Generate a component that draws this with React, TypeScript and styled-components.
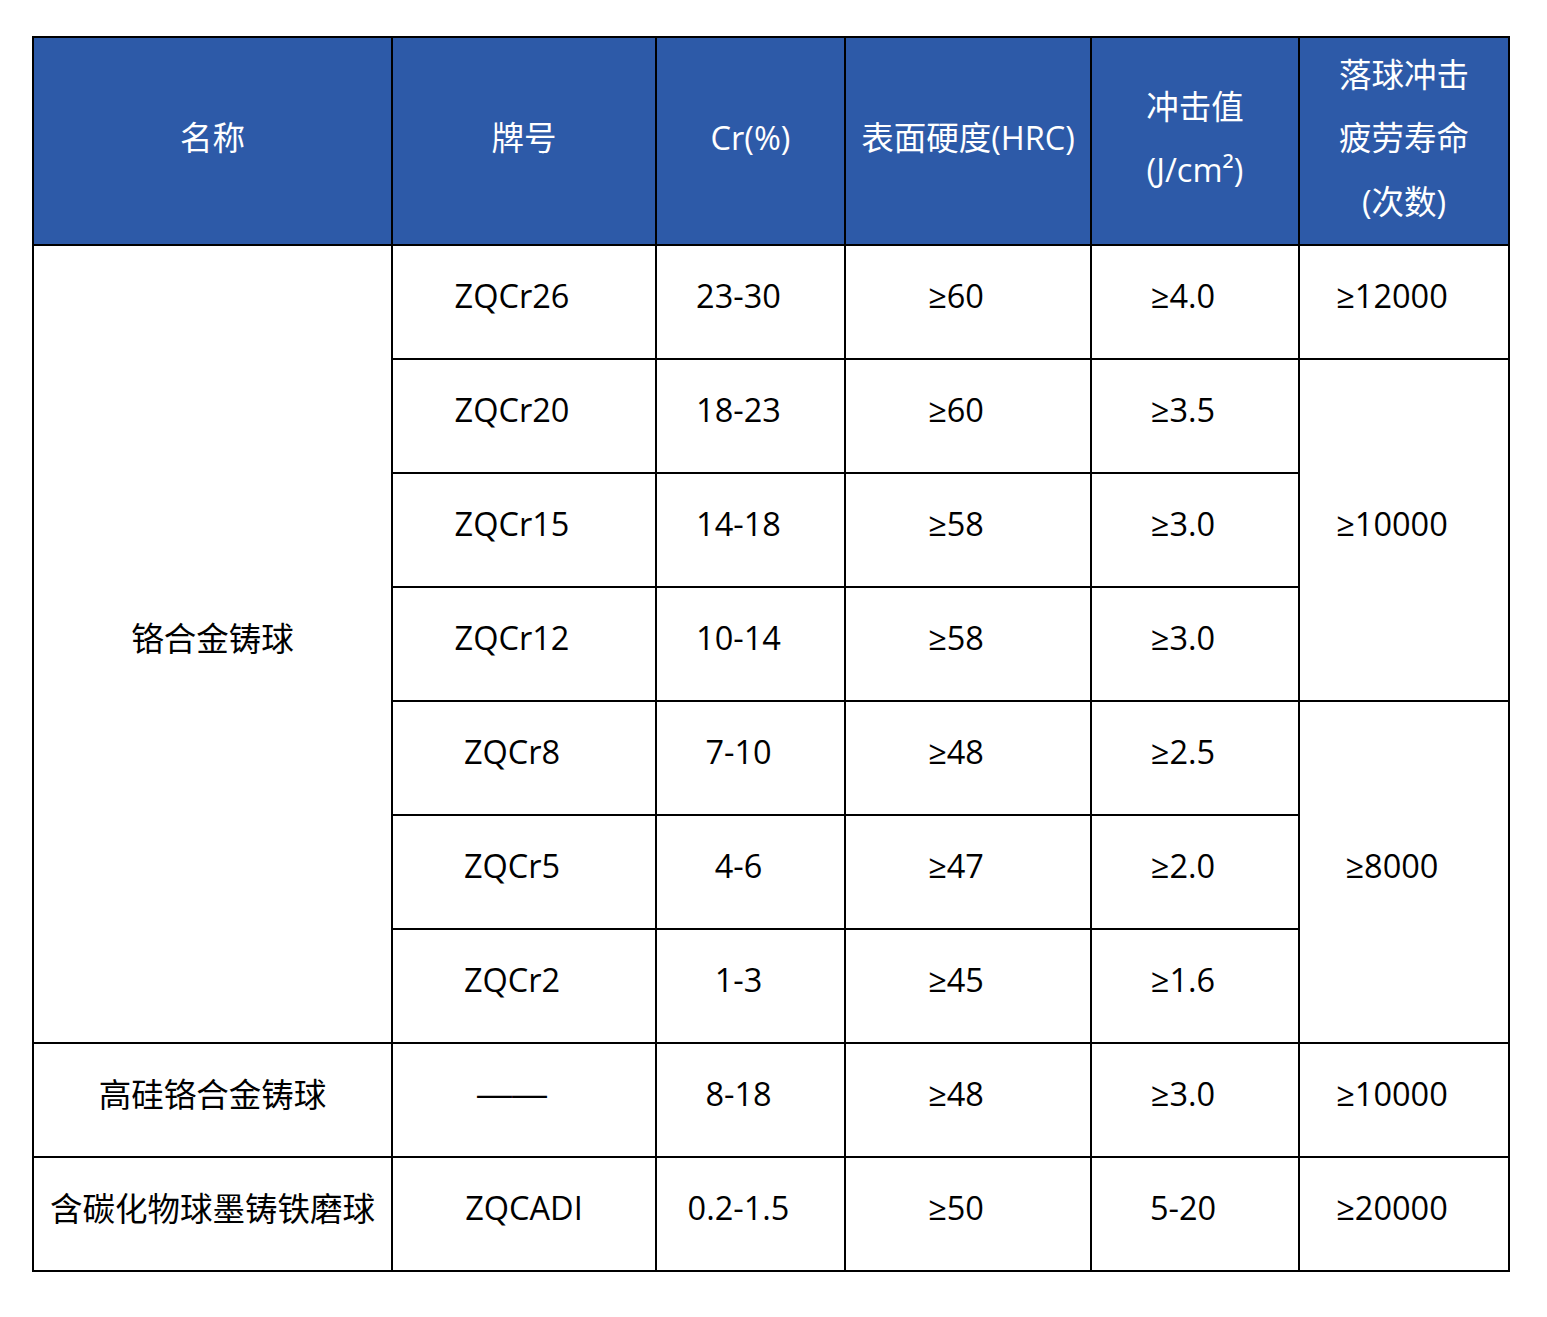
import React from "react";
import styled, { createGlobalStyle } from "styled-components";

const GlobalStyle = createGlobalStyle`
  body {
    margin: 0;
    background: #ffffff;
    font-family: "Open Sans", "Noto Sans CJK SC", sans-serif;
  }
`;

type Row = {
  name?: { text: string; span: number };
  grade: string;
  cr: string;
  hrc: string;
  impact: string;
  life?: { text: string; span: number };
  centerGrade?: boolean;
};

const rows: Row[] = [
  {
    name: { text: "铬合金铸球", span: 7 },
    grade: "ZQCr26",
    cr: "23-30",
    hrc: "≥60",
    impact: "≥4.0",
    life: { text: "≥12000", span: 1 },
  },
  {
    grade: "ZQCr20",
    cr: "18-23",
    hrc: "≥60",
    impact: "≥3.5",
    life: { text: "≥10000", span: 3 },
  },
  { grade: "ZQCr15", cr: "14-18", hrc: "≥58", impact: "≥3.0" },
  { grade: "ZQCr12", cr: "10-14", hrc: "≥58", impact: "≥3.0" },
  {
    grade: "ZQCr8",
    cr: "7-10",
    hrc: "≥48",
    impact: "≥2.5",
    life: { text: "≥8000", span: 3 },
  },
  { grade: "ZQCr5", cr: "4-6", hrc: "≥47", impact: "≥2.0" },
  { grade: "ZQCr2", cr: "1-3", hrc: "≥45", impact: "≥1.6" },
  {
    name: { text: "高硅铬合金铸球", span: 1 },
    grade: "——",
    cr: "8-18",
    hrc: "≥48",
    impact: "≥3.0",
    life: { text: "≥10000", span: 1 },
  },
  {
    name: { text: "含碳化物球墨铸铁磨球", span: 1 },
    grade: "ZQCADI",
    cr: "0.2-1.5",
    hrc: "≥50",
    impact: "5-20",
    life: { text: "≥20000", span: 1 },
    centerGrade: true,
  },
];

function App() {
  return (
    <Page>
      <GlobalStyle />
      <Table>
        <colgroup>
          <col style={{ width: 359 }} />
          <col style={{ width: 264 }} />
          <col style={{ width: 189 }} />
          <col style={{ width: 246 }} />
          <col style={{ width: 208 }} />
          <col style={{ width: 210 }} />
        </colgroup>
        <thead>
          <HeadRow>
            <Th>名称</Th>
            <Th>牌号</Th>
            <Th>Cr(%)</Th>
            <Th>表面硬度(HRC)</Th>
            <Th>
              冲击值
              <br />
              (J/cm²)
            </Th>
            <Th>
              落球冲击
              <br />
              疲劳寿命
              <br />
              (次数)
            </Th>
          </HeadRow>
        </thead>
        <tbody>
          {rows.map((r, i) => (
            <BodyRow key={i}>
              {r.name && <Td rowSpan={r.name.span}>{r.name.text}</Td>}
              <Td $shift={!r.centerGrade}>
                {r.grade === "——" ? <Dash>{r.grade}</Dash> : r.grade}
              </Td>
              <Td $shift>{r.cr}</Td>
              <Td $shift>{r.hrc}</Td>
              <Td $shift>{r.impact}</Td>
              {r.life && (
                <Td $shift rowSpan={r.life.span}>
                  {r.life.text}
                </Td>
              )}
            </BodyRow>
          ))}
        </tbody>
      </Table>
    </Page>
  );
}

const Page = styled.div`
  padding: 36px 0 40px 32px;
`;

const Table = styled.table`
  width: 1476px;
  table-layout: fixed;
  border-collapse: collapse;
  border: 2px solid #000;
  font-size: 32.5px;
  color: #000;
`;

const HeadRow = styled.tr`
  height: 208px;
  background-color: #2d5aa8;
`;

const Th = styled.th`
  border: 2px solid #000;
  color: #ffffff;
  font-weight: 400;
  line-height: 63.5px;
  text-align: center;
  vertical-align: middle;
  padding: 0 0 6px 0;
  white-space: nowrap;
`;

const BodyRow = styled.tr`
  height: 114px;
`;

const Td = styled.td<{ $shift?: boolean }>`
  border: 2px solid #000;
  text-align: center;
  vertical-align: middle;
  padding: 0 ${(p) => (p.$shift ? "24px" : "0")} 14px 0;
  white-space: nowrap;
`;

const Dash = styled.span`
  display: inline-block;
  font-family: "Liberation Sans", sans-serif;
  font-size: 35px;
`;

export default App;
